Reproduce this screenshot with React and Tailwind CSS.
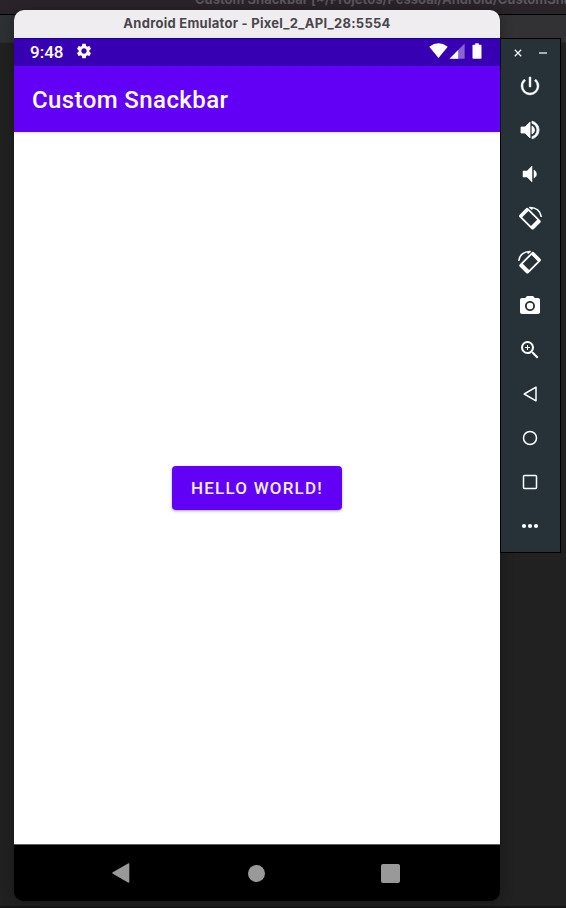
import {
  MdPowerSettingsNew,
  MdVolumeUp,
  MdVolumeDown,
  MdCameraAlt,
  MdZoomIn,
  MdSettings,
} from "react-icons/md";

function RotateIcon({ flipped }) {
  return (
    <svg width="24" height="24" viewBox="0 0 24 24" className={flipped ? "-scale-x-100" : ""}>
      <g transform="rotate(45 11.9 12.7)">
        <path
          fill="white"
          fillRule="evenodd"
          d="M3.6 6.5h16.6a1.8 1.8 0 0 1 1.8 1.8v8.8a1.8 1.8 0 0 1-1.8 1.8H3.6a1.8 1.8 0 0 1-1.8-1.8V8.3a1.8 1.8 0 0 1 1.8-1.8zM5.4 8.3v8.8h12.4V8.3z"
        />
      </g>
      <path d="M11.5 1.4C18 1.1 22.7 5 23.3 11" fill="none" stroke="white" strokeWidth="1.5" />
      <path d="M10.5.9l4.4 1-.8 2.3z" fill="white" />
    </svg>
  );
}

function Outline({ children }) {
  return (
    <svg width="24" height="24" viewBox="0 0 24 24" fill="none" stroke="white" strokeWidth="1.5" strokeLinejoin="round">
      {children}
    </svg>
  );
}

function Toolbar() {
  return (
    <aside className="absolute left-[500px] top-[38px] flex h-[515px] w-[61px] flex-col border border-black bg-[#263238]">
      <div className="flex h-[35px] items-start justify-between pl-[13px] pr-[13px] pt-[10px]">
        <svg width="8" height="8" viewBox="0 0 8 8" stroke="#f3f5f5" strokeWidth="1.3">
          <path d="M.8.8l6.4 6.4M7.2.8L.8 7.2" />
        </svg>
        <span className="mt-[3px] h-[2px] w-2 bg-[#a8afb2]" />
      </div>
      <div className="flex flex-col items-center gap-5 pr-[2px] text-2xl text-white">
        <MdPowerSettingsNew stroke="white" strokeWidth=".4" className="[&>path:first-child]:stroke-none" />
        <MdVolumeUp stroke="white" strokeWidth=".8" className="[&>path:first-child]:stroke-none" />
        <MdVolumeDown stroke="white" strokeWidth=".5" className="[&>path:first-child]:stroke-none" />
        <RotateIcon />
        <RotateIcon flipped />
        <MdCameraAlt />
        <MdZoomIn />
        <Outline>
          <path d="M18 5.2v13.6L6.2 12z" />
        </Outline>
        <Outline>
          <circle cx="12" cy="12" r="6.5" />
        </Outline>
        <Outline>
          <rect x="5.5" y="5.5" width="13" height="13" rx="1" />
        </Outline>
        <svg width="24" height="24" viewBox="0 0 24 24" fill="white">
          <circle cx="6" cy="12" r="2.1" />
          <circle cx="12" cy="12" r="2.1" />
          <circle cx="18" cy="12" r="2.1" />
        </svg>
      </div>
    </aside>
  );
}

function StatusBar() {
  return (
    <div className="flex h-7 shrink-0 items-center bg-[#3800b3] pl-4 pr-[17px] text-white shadow-[inset_0_1px_0_#14009a]">
      <span className="mt-px w-[33px] whitespace-nowrap text-[17px] font-medium leading-none">9:48</span>
      <MdSettings className="ml-3 -mt-[2px] text-[18px]" />
      <svg className="ml-auto -mt-[2px]" width="54" height="18" viewBox="0 0 54 18" fill="white">
        <path d="M.3 4.7Q9.5-2.1 18.7 4.7L9.5 16z" />
        <path d="M35.6 1.6v15.1H20.5z" opacity=".4" />
        <path d="M29.2 8v8.7h-8.7z" />
        <path d="M46.3 1.3h3.4v1.5h2.1q.7 0 .7.7v12.5q0 .7-.7.7h-7.6q-.7 0-.7-.7V3.5q0-.7.7-.7h2.1z" />
      </svg>
    </div>
  );
}

function Emulator() {
  return (
    <main className="absolute left-[14px] top-[10px] flex h-[891px] w-[486px] flex-col overflow-hidden rounded-[10px] bg-black shadow-[0_2px_14px_rgba(0,0,0,0.3)]">
      <header className="flex h-7 shrink-0 items-center justify-center bg-[#f0edf0] text-[13px] font-bold tracking-[0.27px] text-[#48464a] [font-family:Inter,sans-serif]">
        <span className="whitespace-nowrap">Android Emulator - Pixel_2_API_28:5554</span>
      </header>
      <StatusBar />
      <div className="z-10 flex h-[65.5px] shrink-0 items-center bg-[#6200f5] pl-[18px] pt-[2px] shadow-[0_1px_3px_rgba(0,0,0,0.15)]">
        <h1 className="whitespace-nowrap text-[24px] font-medium leading-none tracking-[0.4px] text-white">Custom Snackbar</h1>
      </div>
      <section className="flex h-[712.5px] shrink-0 items-center justify-center bg-white">
        <button className="flex h-[44px] w-[170px] items-center justify-center rounded-[4px] bg-[#6200f5] pt-px text-[17px] font-medium tracking-[1.2px] text-[#f3edff] shadow-[0_1px_3px_rgba(0,0,0,0.35)]">
          HELLO WORLD!
        </button>
      </section>
      <nav className="flex h-[57px] items-center justify-between border-t border-[#606060] bg-black pl-[98px] pr-[100px]">
        <svg width="18" height="20" viewBox="0 0 18 20" fill="#999">
          <path d="M16 .5Q17.3 0 17.3 1.3v17.4q0 1.3-1.3.8L.8 10.7Q-.2 10 .8 9.3z" />
        </svg>
        <span className="ml-[2px] size-[17px] rounded-full bg-[#999]" />
        <span className="size-[19px] rounded-[2px] bg-[#999]" />
      </nav>
    </main>
  );
}

export default function App() {
  return (
    <div className="relative flex h-[908px] w-[566px] flex-col overflow-hidden bg-[#212121] font-['Roboto',sans-serif]">
      <div className="relative h-[15px] shrink-0 border-b border-black bg-[#2a2329]">
        <span className="absolute -top-[9px] left-[195px] whitespace-nowrap text-[13px] font-bold leading-4 text-[#5b565b] [font-family:Inter,sans-serif]">
          Custom Snackbar [~/Projetos/Pessoal/Android/CustomSnackbar]
        </span>
      </div>
      <div className="flex h-7 shrink-0 justify-between border-b border-[#292a2b]">
        <span className="w-[14px] bg-[#2d3133]" />
        <span className="w-[66px] bg-[#323234]" />
      </div>
      <div className="grow" />
      <div className="h-[2px] bg-[#181516]" />
      <Emulator />
      <Toolbar />
    </div>
  );
}
